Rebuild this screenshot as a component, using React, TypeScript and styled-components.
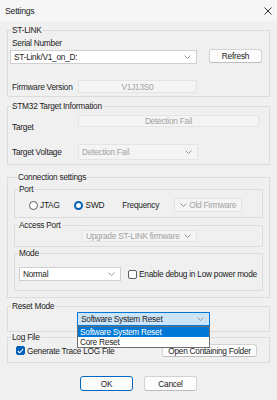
import React from 'react';
import styled, { createGlobalStyle } from 'styled-components';

const GlobalStyle = createGlobalStyle`
  html, body {
    margin: 0;
    padding: 0;
    background: #f0f0f0;
  }
  body {
    font-family: "Liberation Sans", Arial, sans-serif;
    font-size: 8.3px;
    letter-spacing: -0.25px;
    color: #1b1b1b;
  }
`;

const Window = styled.div`
  width: 277px;
  height: 400px;
  overflow: hidden;
  background: #f0f0f0;
`;

const TitleBar = styled.div`
  height: 21px;
  background: #f6f6f6;
  display: flex;
  align-items: center;
  justify-content: space-between;
  padding: 0 5px;
  font-size: 8.7px;
`;

const Body = styled.div`
  padding: 0 7px;
`;

// group box: legend sits on the top border, padding-bottom decides where the bottom line lands
const Group = styled.fieldset<{ $mt: number; $pb: number; $px?: number }>`
  margin: ${(p) => p.$mt}px 0 0;
  padding: 0 ${(p) => p.$px ?? 0}px ${(p) => p.$pb}px;
  border: 1px solid #dcdcdc;
  min-width: 0;
  position: relative;
`;

const Legend = styled.legend`
  padding: 0 1px;
  margin-left: 3px;
  line-height: 10px;
  height: 10px;
`;

const Label = styled.div<{ $w?: number; $mt?: number; $pl?: number }>`
  line-height: 10px;
  width: ${(p) => (p.$w ? `${p.$w}px` : 'auto')};
  margin-top: ${(p) => p.$mt ?? 0}px;
  padding-left: ${(p) => p.$pl ?? 0}px;
  flex-shrink: 0;
  white-space: nowrap;
`;

const Row = styled.div<{ $mt?: number; $align?: string; $pl?: number }>`
  display: flex;
  align-items: ${(p) => p.$align ?? 'center'};
  margin-top: ${(p) => p.$mt ?? 0}px;
  padding-left: ${(p) => p.$pl ?? 0}px;
`;

const Box = styled.div<{ $w: number; $h: number }>`
  box-sizing: border-box;
  width: ${(p) => p.$w}px;
  height: ${(p) => p.$h}px;
  background: #f4f4f4;
  border: 1px solid #e4e4e4;
  color: #a3a3a3;
  display: flex;
  align-items: center;
  justify-content: center;
  flex-shrink: 0;
`;

type ComboState = 'normal' | 'disabled' | 'focused';

const Combo = styled.div<{ $w: number; $h: number; $mt?: number; $ml?: number; $state?: ComboState; $arrowLeft?: boolean }>`
  box-sizing: border-box;
  width: ${(p) => p.$w}px;
  height: ${(p) => p.$h}px;
  margin-top: ${(p) => p.$mt ?? 0}px;
  margin-left: ${(p) => p.$ml ?? 0}px;
  flex-shrink: 0;
  display: flex;
  flex-direction: ${(p) => (p.$arrowLeft ? 'row-reverse' : 'row')};
  align-items: center;
  justify-content: space-between;
  padding: ${(p) => (p.$arrowLeft ? '0 3px 0 5px' : '0 5px 0 3px')};
  background: ${(p) => (p.$state === 'disabled' ? '#f4f4f4' : p.$state === 'focused' ? '#cce4f7' : '#ffffff')};
  border: 1px solid ${(p) => (p.$state === 'disabled' ? '#e4e4e4' : p.$state === 'focused' ? '#0078d7' : '#cfcfcf')};
  color: ${(p) => (p.$state === 'disabled' ? '#a3a3a3' : '#1b1b1b')};
`;

const ComboText = styled.span<{ $grow?: boolean }>`
  white-space: nowrap;
  flex: ${(p) => (p.$grow ? 1 : '0 0 auto')};
  text-align: ${(p) => (p.$grow ? 'center' : 'left')};
`;

const Button = styled.button<{ $w: number; $h: number; $default?: boolean }>`
  box-sizing: border-box;
  width: ${(p) => p.$w}px;
  height: ${(p) => p.$h}px;
  padding: 0;
  font: inherit;
  letter-spacing: inherit;
  color: #1b1b1b;
  background: #fdfdfd;
  border: 1px solid ${(p) => (p.$default ? '#0067c0' : '#d2d2d2')};
  border-bottom-color: ${(p) => (p.$default ? '#0067c0' : '#bcbcbc')};
  border-radius: 3px;
  flex-shrink: 0;
`;

const Radio = styled.span<{ $checked?: boolean; $ml?: number }>`
  box-sizing: border-box;
  width: 9px;
  height: 9px;
  margin-left: ${(p) => p.$ml ?? 0}px;
  border-radius: 50%;
  flex-shrink: 0;
  border: ${(p) => (p.$checked ? '2.5px solid #005fb8' : '1px solid #5c5c5c')};
  background: #ffffff;
`;

const Check = styled.span<{ $checked?: boolean; $ml?: number }>`
  box-sizing: border-box;
  width: 9px;
  height: 9px;
  margin-left: ${(p) => p.$ml ?? 0}px;
  border-radius: 2px;
  flex-shrink: 0;
  border: 1px solid ${(p) => (p.$checked ? '#005fb8' : '#5c5c5c')};
  background: ${(p) => (p.$checked ? '#005fb8' : '#ffffff')};
  display: flex;
  align-items: center;
  justify-content: center;
`;

const OptionText = styled.span<{ $ml: number }>`
  margin-left: ${(p) => p.$ml}px;
  white-space: nowrap;
`;

const Anchor = styled.div<{ $ml: number }>`
  position: relative;
  margin-left: ${(p) => p.$ml}px;
`;

const DropList = styled.div`
  position: absolute;
  left: 0;
  top: 100%;
  width: 133px;
  box-sizing: border-box;
  background: #ffffff;
  border: 1px solid #6e6e6e;
  z-index: 5;
`;

const DropItem = styled.div<{ $selected?: boolean }>`
  height: 10px;
  line-height: 10px;
  padding-left: 2px;
  background: ${(p) => (p.$selected ? '#0078d7' : '#ffffff')};
  color: ${(p) => (p.$selected ? '#ffffff' : '#1b1b1b')};
`;

const Footer = styled.div`
  display: flex;
  justify-content: center;
  gap: 11px;
  margin-top: 13px;
`;

function Chevron() {
  return (
    <svg width="7" height="4" viewBox="0 0 7 4">
      <polyline points="0.5,0.5 3.5,3.5 6.5,0.5" fill="none" stroke="#8a8a8a" strokeWidth="0.9" />
    </svg>
  );
}

function CloseIcon() {
  return (
    <svg width="8" height="8" viewBox="0 0 8 8">
      <path d="M0.5 0.5 L7.5 7.5 M7.5 0.5 L0.5 7.5" stroke="#1b1b1b" strokeWidth="0.9" />
    </svg>
  );
}

function Tick() {
  return (
    <svg width="7" height="6" viewBox="0 0 7 6">
      <polyline points="0.8,3 2.7,4.8 6.2,1" fill="none" stroke="#ffffff" strokeWidth="1.1" />
    </svg>
  );
}

export default function App() {
  return (
    <Window>
      <GlobalStyle />
      <TitleBar>
        <span>Settings</span>
        <CloseIcon />
      </TitleBar>
      <Body>
        <Group $mt={4} $pb={3}>
          <Legend>ST-LINK</Legend>
          <Label $mt={3} $pl={4}>Serial Number</Label>
          <Row $mt={1} $align="flex-start" $pl={2}>
            <Combo $w={187} $h={14} $mt={1}>
              <ComboText>ST-Link/V1_on_D:</ComboText>
              <Chevron />
            </Combo>
            <Button $w={53} $h={14} style={{ marginLeft: 12 }}>Refresh</Button>
          </Row>
          <Row $mt={16} $pl={4}>
            <Label $w={66}>Firmware Version</Label>
            <Box $w={119} $h={13}>V1J13S0</Box>
          </Row>
        </Group>

        <Group $mt={4} $pb={4}>
          <Legend>STM32 Target Information</Legend>
          <Row $mt={4} $align="flex-start" $pl={4}>
            <Label $w={66} $mt={7}>Target</Label>
            <Box $w={181} $h={12}>Detection Fail</Box>
          </Row>
          <Row $mt={12} $pl={4}>
            <Label $w={66}>Target Voltage</Label>
            <Combo $w={120} $h={16} $state="disabled">
              <ComboText>Detection Fail</ComboText>
              <Chevron />
            </Combo>
          </Row>
        </Group>

        <Group $mt={7} $pb={6} $px={6}>
          <Legend>Connection settings</Legend>
          <Group $mt={2} $pb={5}>
            <Legend>Port</Legend>
            <Row $mt={4} $pl={14}>
              <Radio />
              <OptionText $ml={2}>JTAG</OptionText>
              <Radio $checked $ml={14} />
              <OptionText $ml={3}>SWD</OptionText>
              <OptionText $ml={18}>Frequency</OptionText>
              <Combo $w={68} $h={14} $ml={15} $state="disabled" $arrowLeft>
                <ComboText $grow>Old Firmware</ComboText>
                <Chevron />
              </Combo>
            </Row>
          </Group>
          <Group $mt={2} $pb={4}>
            <Legend>Access Port</Legend>
            <Row $pl={67}>
              <Combo $w={115} $h={12} $state="disabled">
                <ComboText>Upgrade ST-LINK firmware</ComboText>
                <Chevron />
              </Combo>
            </Row>
          </Group>
          <Group $mt={1} $pb={9}>
            <Legend>Mode</Legend>
            <Row $mt={9} $pl={4}>
              <Combo $w={102} $h={14}>
                <ComboText>Normal</ComboText>
                <Chevron />
              </Combo>
              <Check $ml={7} />
              <OptionText $ml={2}>Enable debug in Low power mode</OptionText>
            </Row>
          </Group>
        </Group>

        <Group $mt={3} $pb={5}>
          <Legend>Reset Mode</Legend>
          <Row $mt={1}>
            <Anchor $ml={69}>
              <Combo $w={133} $h={14} $state="focused">
                <ComboText>Software System Reset</ComboText>
                <Chevron />
              </Combo>
              <DropList>
                <DropItem $selected>Software System Reset</DropItem>
                <DropItem>Core Reset</DropItem>
              </DropList>
            </Anchor>
          </Row>
        </Group>

        <Group $mt={0} $pb={5}>
          <Legend>Log File</Legend>
          <Row $mt={2} $pl={8}>
            <Check $checked>
              <Tick />
            </Check>
            <OptionText $ml={2}>Generate Trace LOG File</OptionText>
            <Button $w={95} $h={13} style={{ marginLeft: 'auto', marginRight: 12 }}>
              Open Containing Folder
            </Button>
          </Row>
        </Group>

        <Footer>
          <Button $w={53} $h={15} $default>OK</Button>
          <Button $w={53} $h={15}>Cancel</Button>
        </Footer>
      </Body>
    </Window>
  );
}
